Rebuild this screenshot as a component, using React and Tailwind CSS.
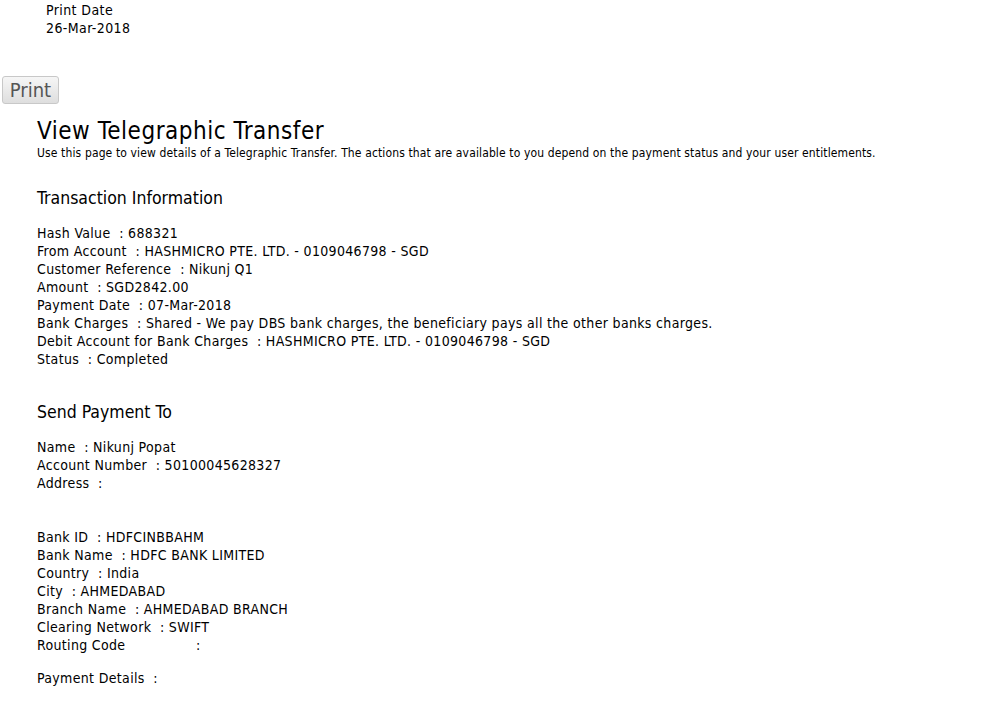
export default function App() {
  const f = { fontFamily: '"DejaVu Sans Condensed", "DejaVu Sans", sans-serif' };
  const Row = ({ label, value }) => (
    <div className="h-[18px] leading-[18px] text-[14px] tracking-[0.33px] text-black whitespace-pre">
      {label}&nbsp;&nbsp;: {value}
    </div>
  );
  return (
    <div className="bg-white w-[984px] h-[725px] overflow-hidden text-black" style={f}>
      <div className="pl-[46px] pt-[1px] text-[14px] leading-[18px] tracking-[0.4px]">
        <div>Print Date</div>
        <div>26-Mar-2018</div>
      </div>
      <div className="pl-[2px] mt-[39px]">
        <button className="h-[28px] w-[57px] border border-[#c8c8c8] rounded-[3px] bg-gradient-to-b from-[#f6f6f6] to-[#dedede] text-[20px] leading-[26px] text-[#555]">
          Print
        </button>
      </div>
      <div className="pl-[37px]">
        <div className="mt-[13px] text-[24px] leading-[28px] tracking-[0.52px]">View Telegraphic Transfer</div>
        <div className="text-[12px] leading-[16px] tracking-[0.13px]">
          Use this page to view details of a Telegraphic Transfer. The actions that are available to you depend on the payment status and your user entitlements.
        </div>
        <div className="mt-[25px] text-[17.5px] leading-[24px]">Transaction Information</div>
        <div className="mt-[14px]">
          <Row label="Hash Value" value="688321" />
          <Row label="From Account" value="HASHMICRO PTE. LTD. - 0109046798 - SGD" />
          <Row label="Customer Reference" value="Nikunj Q1" />
          <Row label="Amount" value="SGD2842.00" />
          <Row label="Payment Date" value="07-Mar-2018" />
          <Row label="Bank Charges" value="Shared - We pay DBS bank charges, the beneficiary pays all the other banks charges." />
          <Row label="Debit Account for Bank Charges" value="HASHMICRO PTE. LTD. - 0109046798 - SGD" />
          <Row label="Status" value="Completed" />
        </div>
        <div className="mt-[32px] text-[17.5px] leading-[24px]">Send Payment To</div>
        <div className="mt-[14px]">
          <Row label="Name" value="Nikunj Popat" />
          <Row label="Account Number" value="50100045628327" />
          <Row label="Address" value="" />
          <div className="h-[36px]" />
          <Row label="Bank ID" value="HDFCINBBAHM" />
          <Row label="Bank Name" value="HDFC BANK LIMITED" />
          <Row label="Country" value="India" />
          <Row label="City" value="AHMEDABAD" />
          <Row label="Branch Name" value="AHMEDABAD BRANCH" />
          <Row label="Clearing Network" value="SWIFT" />
          <div className="h-[18px] leading-[18px] text-[14px] tracking-[0.33px] flex">
            <span className="w-[159px]">Routing Code</span>
            <span>:</span>
          </div>
          <div className="mt-[15px]">
            <Row label="Payment Details" value="" />
          </div>
        </div>
      </div>
    </div>
  );
}
